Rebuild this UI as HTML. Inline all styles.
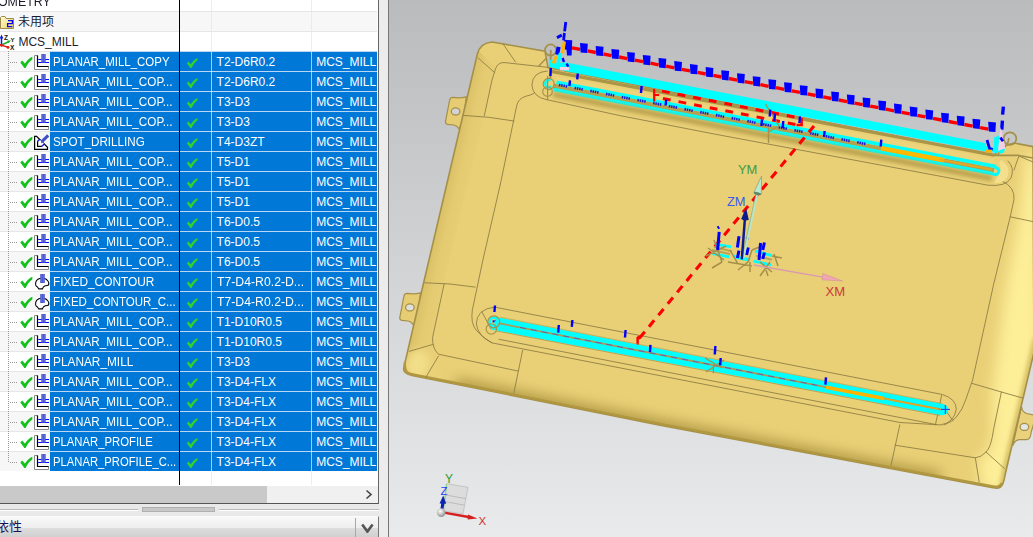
<!DOCTYPE html><html><head><meta charset="utf-8"><title>NX</title><style>html,body{margin:0;padding:0;width:1033px;height:537px;overflow:hidden;background:#ebebeb;font-family:"Liberation Sans","Noto Sans CJK SC",sans-serif;font-size:12px;color:#222}
#panel{position:absolute;left:0;top:0;width:378px;height:503px;background:#fff;overflow:hidden;border-right:1px solid #666;border-bottom:1px solid #555}
.row{position:absolute;left:0;width:377px;height:19px;border-top:1px solid #e6e6e6;background:#fff}
.row.alt{background:#f7f7f7}
.t{position:absolute;top:1px;line-height:19px;white-space:nowrap;transform-origin:0 50%;color:#1c1c2c}
.t.w{color:#fff}
.cj{font-size:12px}
.ic{position:absolute}
.sel{position:absolute;left:50px;top:0;width:327px;height:19px;background:#0078d7}
.row.op{border-top-color:#e6e6e6}
.row.op .sel{box-shadow:0 -1px 0 #b9d6f2}
.dot{position:absolute;left:10px;top:10px;width:8px;height:1px;background-image:linear-gradient(90deg,#999 50%,transparent 50%);background-size:2px 1px}
.vdot{position:absolute;left:8px;top:51px;width:1px;height:411px;background-image:linear-gradient(180deg,#999 50%,transparent 50%);background-size:1px 2px}
.cl{position:absolute;top:0;width:1px;height:485px}
.c2{background:rgba(225,232,240,.75)}
#sb{position:absolute;left:0;top:486px;width:378px;height:17px;background:#f0f0f0}
#thumb{position:absolute;left:0;top:0;width:267px;height:17px;background:#c9c9c9}
#split{position:absolute;left:0;top:504px;width:379px;height:12px;background:#e9e9e9}
#split .l1{position:absolute;left:0;top:6px;width:138px;height:1px;background:#fff;box-shadow:0 -1px 0 #b8b8b8}
#split .l2{position:absolute;left:219px;top:6px;width:160px;height:1px;background:#fff;box-shadow:0 -1px 0 #b8b8b8}
#split .grip{position:absolute;left:142px;top:3px;width:73px;height:5px;background:#c8c8c8;border:1px solid #b0b0b0;box-sizing:border-box}
#dep{position:absolute;left:0;top:516px;width:379px;height:21px;background:linear-gradient(#f8f8f8 0%,#eeeeee 54%,#dddddd 56%,#d0d0d0 100%);border-right:1px solid #777;border-top:1px solid #fbfbfb;box-sizing:border-box}
#dep span{position:absolute;left:-4px;top:0px;font-size:13px;color:#14145a;line-height:19px}
#dep .dv{position:absolute;left:355px;top:1px;width:1px;height:21px;background:#a8a8a8}
#strip{position:absolute;left:379px;top:0;width:9px;height:537px;background:#ececec;border-right:1px solid #777}
#view{position:absolute;left:389px;top:0;width:644px;height:537px;overflow:hidden}
#view svg{display:block}
</style></head><body>
<svg width="0" height="0" style="position:absolute"><defs>
<symbol id="chk" viewBox="0 0 14 14"><path d="M0.3 6.6 L2.2 4.6 L4.9 7.6 C6.8 4.6 9.6 1.9 12.4 0.8 L12.3 3.4 C9.6 5.2 7.2 8.4 5.6 11.9 L4.4 11.9 Z" fill="#14c01c"/></symbol>
<symbol id="chk2" viewBox="0 0 14 13"><path d="M0.8 6.2 L2.4 4.6 L4.7 7.2 C6.4 4.6 8.8 2.1 11.6 0.9 L11.5 3.2 C9.2 4.8 7 7.8 5.6 11 L4.4 11 Z" fill="#2fd030"/></symbol>
<symbol id="opp" viewBox="0 0 17 18"><path d="M0.5 1.5 H3.5 V12.5 H14.5 V15.5 H0.5 Z" fill="#fff" stroke="#8a8a8a" stroke-width="1"/><path d="M3.5 1.5 V12.5 H14.5" fill="none" stroke="#000" stroke-width="1.2"/><path d="M4.2 5.5 H15 M4.2 8.5 H15" stroke="#0a0aff" stroke-width="1"/><rect x="7.3" y="0" width="4.4" height="8.7" fill="#4c5ad0"/><path d="M8.4 0.5 V8.5 M10.4 0.5 V8.5" stroke="#7c8ae6" stroke-width="0.8" stroke-dasharray="1 1"/></symbol>
<symbol id="ops" viewBox="0 -0.8 17 18"><path d="M0.6 1.6 H2.6 L13.5 12.5 V14.5 H0.6 Z" fill="#fff" stroke="#000" stroke-width="1.2"/><path d="M3.6 6.5 V11.6 H8" fill="none" stroke="#000" stroke-width="1.2"/><path d="M3.6 6.5 L6 4.2 M7.6 11.6 L10.3 9.2" stroke="#1010e0" stroke-width="1.2"/><path d="M3.2 11.9 L3.2 6.3 L5.7 4.6 L10 9 L7.8 11.9Z" fill="#fff" stroke="none"/><path d="M3.6 6.5 V11.6 H7.8" fill="none" stroke="#000" stroke-width="1.2"/><path d="M3.6 6.6 L6 4.4 M7.6 11.6 L10.3 9.2" stroke="#1010e0" stroke-width="1.2"/><path d="M7.6 7 L14.2 0.6" stroke="#3f4fc8" stroke-width="3"/><path d="M7 8.5 L7.2 6 L9.4 8 Z" fill="#5b66c8"/></symbol>
<symbol id="opf" viewBox="0 0 17 18"><path d="M7 4.3 C4 4.6 2.2 6.4 1.7 8.6 C1.4 10.4 1.6 11.6 2.2 12 C3.4 12.6 4.2 14 4.8 14.9 H8.4 C8.8 13.6 9.6 12.4 11.2 11.8 C12.4 11.4 14 11.4 14.6 11 C15 9.6 14.8 8 14 7 C13 5.6 11.6 4.6 10 4.2 Z" fill="#fff" stroke="#000" stroke-width="1.1"/><rect x="6.2" y="0" width="4.6" height="9" fill="#4c5ad0"/><path d="M7.4 0.5 V8.8 M9.4 0.5 V8.8" stroke="#7c8ae6" stroke-width="0.8" stroke-dasharray="1 1"/></symbol>
<symbol id="folder" viewBox="0 0 17 17"><defs><linearGradient id="fg" x1="0" y1="0" x2="1" y2="1"><stop offset="0" stop-color="#fffbd8"/><stop offset="1" stop-color="#f0d465"/></linearGradient></defs><path d="M0.5 4.5 L1.5 3.5 H5 L6 5.5 H13.5 V15.5 H0.5 Z" fill="url(#fg)" stroke="#9c8a4a" stroke-width="1"/><path d="M8 7.6 H12.4 V10.6 H7.6 V13.6 H12.4" fill="none" stroke="#0a0aee" stroke-width="1.3"/></symbol>
<symbol id="mcs" viewBox="0 0 20 20"><path d="M3.5 13 V5" stroke="#0a1ed0" stroke-width="1.5"/><path d="M1.6 6.6 L3.5 2.6 L5.4 6.6 Z" fill="#0a1ed0"/><path d="M3.6 13 L11 9.6" stroke="#1fae2a" stroke-width="1.6"/><path d="M9.2 8.4 L13 8.6 L10.4 11.2 Z" fill="#1fae2a"/><path d="M2 12.6 L11 15.6" stroke="#e01818" stroke-width="1.5"/><circle cx="3.4" cy="13.2" r="1.5" fill="#e01818"/><circle cx="10" cy="15.4" r="1.4" fill="#e01818"/><text x="6" y="8" font-size="6.5" font-weight="bold" fill="#111" font-family="Liberation Sans, sans-serif">Z</text><text x="12.4" y="10" font-size="6" font-weight="bold" fill="#111" font-family="Liberation Sans, sans-serif">Y</text><text x="12" y="18.4" font-size="6.5" font-weight="bold" fill="#111" font-family="Liberation Sans, sans-serif">X</text></symbol>
</defs></svg>

<div id="panel">
<div class="row" style="top:-9px"><span class="t" style="left:-1.6px;transform:scaleX(1.03)">OMETRY</span></div>
<div class="row alt" style="top:11px"><svg class="ic" style="left:0;top:1px" width="17" height="17"><use href="#folder"/></svg><span class="t cj" style="left:18px">未用项</span></div>
<div class="row" style="top:31px"><svg class="ic" style="left:-2px;top:0" width="20" height="20"><use href="#mcs"/></svg><span class="t" style="left:18.4px">MCS_MILL</span></div>
<div class="row op alt" style="top:51px"><i class="dot"></i><svg class="ic" style="left:20px;top:4px" width="14" height="14"><use href="#chk"/></svg><svg class="ic" style="left:34px;top:2px" width="17" height="18"><use href="#opp"/></svg><div class="sel"></div><span class="t w" style="left:53.4px;transform:scaleX(0.955)">PLANAR_MILL_COPY</span><svg class="ic" style="left:186px;top:5px" width="14" height="13"><use href="#chk2"/></svg><span class="t w" style="left:216.6px;transform:scaleX(1)">T2-D6R0.2</span><span class="t w" style="left:316.2px">MCS_MILL</span></div>
<div class="row op" style="top:71px"><i class="dot"></i><svg class="ic" style="left:20px;top:4px" width="14" height="14"><use href="#chk"/></svg><svg class="ic" style="left:34px;top:2px" width="17" height="18"><use href="#opp"/></svg><div class="sel"></div><span class="t w" style="left:53.4px;transform:scaleX(0.975)">PLANAR_MILL_COP...</span><svg class="ic" style="left:186px;top:5px" width="14" height="13"><use href="#chk2"/></svg><span class="t w" style="left:216.6px;transform:scaleX(1)">T2-D6R0.2</span><span class="t w" style="left:316.2px">MCS_MILL</span></div>
<div class="row op alt" style="top:91px"><i class="dot"></i><svg class="ic" style="left:20px;top:4px" width="14" height="14"><use href="#chk"/></svg><svg class="ic" style="left:34px;top:2px" width="17" height="18"><use href="#opp"/></svg><div class="sel"></div><span class="t w" style="left:53.4px;transform:scaleX(0.975)">PLANAR_MILL_COP...</span><svg class="ic" style="left:186px;top:5px" width="14" height="13"><use href="#chk2"/></svg><span class="t w" style="left:216.6px;transform:scaleX(1)">T3-D3</span><span class="t w" style="left:316.2px">MCS_MILL</span></div>
<div class="row op" style="top:111px"><i class="dot"></i><svg class="ic" style="left:20px;top:4px" width="14" height="14"><use href="#chk"/></svg><svg class="ic" style="left:34px;top:2px" width="17" height="18"><use href="#opp"/></svg><div class="sel"></div><span class="t w" style="left:53.4px;transform:scaleX(0.975)">PLANAR_MILL_COP...</span><svg class="ic" style="left:186px;top:5px" width="14" height="13"><use href="#chk2"/></svg><span class="t w" style="left:216.6px;transform:scaleX(1)">T3-D3</span><span class="t w" style="left:316.2px">MCS_MILL</span></div>
<div class="row op alt" style="top:131px"><i class="dot"></i><svg class="ic" style="left:20px;top:4px" width="14" height="14"><use href="#chk"/></svg><svg class="ic" style="left:34px;top:2px" width="17" height="18"><use href="#ops"/></svg><div class="sel"></div><span class="t w" style="left:53.4px;transform:scaleX(0.968)">SPOT_DRILLING</span><svg class="ic" style="left:186px;top:5px" width="14" height="13"><use href="#chk2"/></svg><span class="t w" style="left:216.6px;transform:scaleX(1)">T4-D3ZT</span><span class="t w" style="left:316.2px">MCS_MILL</span></div>
<div class="row op" style="top:151px"><i class="dot"></i><svg class="ic" style="left:20px;top:4px" width="14" height="14"><use href="#chk"/></svg><svg class="ic" style="left:34px;top:2px" width="17" height="18"><use href="#opp"/></svg><div class="sel"></div><span class="t w" style="left:53.4px;transform:scaleX(0.975)">PLANAR_MILL_COP...</span><svg class="ic" style="left:186px;top:5px" width="14" height="13"><use href="#chk2"/></svg><span class="t w" style="left:216.6px;transform:scaleX(1)">T5-D1</span><span class="t w" style="left:316.2px">MCS_MILL</span></div>
<div class="row op alt" style="top:171px"><i class="dot"></i><svg class="ic" style="left:20px;top:4px" width="14" height="14"><use href="#chk"/></svg><svg class="ic" style="left:34px;top:2px" width="17" height="18"><use href="#opp"/></svg><div class="sel"></div><span class="t w" style="left:53.4px;transform:scaleX(0.975)">PLANAR_MILL_COP...</span><svg class="ic" style="left:186px;top:5px" width="14" height="13"><use href="#chk2"/></svg><span class="t w" style="left:216.6px;transform:scaleX(1)">T5-D1</span><span class="t w" style="left:316.2px">MCS_MILL</span></div>
<div class="row op" style="top:191px"><i class="dot"></i><svg class="ic" style="left:20px;top:4px" width="14" height="14"><use href="#chk"/></svg><svg class="ic" style="left:34px;top:2px" width="17" height="18"><use href="#opp"/></svg><div class="sel"></div><span class="t w" style="left:53.4px;transform:scaleX(0.975)">PLANAR_MILL_COP...</span><svg class="ic" style="left:186px;top:5px" width="14" height="13"><use href="#chk2"/></svg><span class="t w" style="left:216.6px;transform:scaleX(1)">T5-D1</span><span class="t w" style="left:316.2px">MCS_MILL</span></div>
<div class="row op alt" style="top:211px"><i class="dot"></i><svg class="ic" style="left:20px;top:4px" width="14" height="14"><use href="#chk"/></svg><svg class="ic" style="left:34px;top:2px" width="17" height="18"><use href="#opp"/></svg><div class="sel"></div><span class="t w" style="left:53.4px;transform:scaleX(0.975)">PLANAR_MILL_COP...</span><svg class="ic" style="left:186px;top:5px" width="14" height="13"><use href="#chk2"/></svg><span class="t w" style="left:216.6px;transform:scaleX(1)">T6-D0.5</span><span class="t w" style="left:316.2px">MCS_MILL</span></div>
<div class="row op" style="top:231px"><i class="dot"></i><svg class="ic" style="left:20px;top:4px" width="14" height="14"><use href="#chk"/></svg><svg class="ic" style="left:34px;top:2px" width="17" height="18"><use href="#opp"/></svg><div class="sel"></div><span class="t w" style="left:53.4px;transform:scaleX(0.975)">PLANAR_MILL_COP...</span><svg class="ic" style="left:186px;top:5px" width="14" height="13"><use href="#chk2"/></svg><span class="t w" style="left:216.6px;transform:scaleX(1)">T6-D0.5</span><span class="t w" style="left:316.2px">MCS_MILL</span></div>
<div class="row op alt" style="top:251px"><i class="dot"></i><svg class="ic" style="left:20px;top:4px" width="14" height="14"><use href="#chk"/></svg><svg class="ic" style="left:34px;top:2px" width="17" height="18"><use href="#opp"/></svg><div class="sel"></div><span class="t w" style="left:53.4px;transform:scaleX(0.975)">PLANAR_MILL_COP...</span><svg class="ic" style="left:186px;top:5px" width="14" height="13"><use href="#chk2"/></svg><span class="t w" style="left:216.6px;transform:scaleX(1)">T6-D0.5</span><span class="t w" style="left:316.2px">MCS_MILL</span></div>
<div class="row op" style="top:271px"><i class="dot"></i><svg class="ic" style="left:20px;top:4px" width="14" height="14"><use href="#chk"/></svg><svg class="ic" style="left:34px;top:2px" width="17" height="18"><use href="#opf"/></svg><div class="sel"></div><span class="t w" style="left:53.4px;transform:scaleX(0.99)">FIXED_CONTOUR</span><svg class="ic" style="left:186px;top:5px" width="14" height="13"><use href="#chk2"/></svg><span class="t w" style="left:216.6px;transform:scaleX(1.02)">T7-D4-R0.2-D...</span><span class="t w" style="left:316.2px">MCS_MILL</span></div>
<div class="row op alt" style="top:291px"><i class="dot"></i><svg class="ic" style="left:20px;top:4px" width="14" height="14"><use href="#chk"/></svg><svg class="ic" style="left:34px;top:2px" width="17" height="18"><use href="#opf"/></svg><div class="sel"></div><span class="t w" style="left:53.4px;transform:scaleX(0.96)">FIXED_CONTOUR_C...</span><svg class="ic" style="left:186px;top:5px" width="14" height="13"><use href="#chk2"/></svg><span class="t w" style="left:216.6px;transform:scaleX(1.02)">T7-D4-R0.2-D...</span><span class="t w" style="left:316.2px">MCS_MILL</span></div>
<div class="row op" style="top:311px"><i class="dot"></i><svg class="ic" style="left:20px;top:4px" width="14" height="14"><use href="#chk"/></svg><svg class="ic" style="left:34px;top:2px" width="17" height="18"><use href="#opp"/></svg><div class="sel"></div><span class="t w" style="left:53.4px;transform:scaleX(0.975)">PLANAR_MILL_COP...</span><svg class="ic" style="left:186px;top:5px" width="14" height="13"><use href="#chk2"/></svg><span class="t w" style="left:216.6px;transform:scaleX(1)">T1-D10R0.5</span><span class="t w" style="left:316.2px">MCS_MILL</span></div>
<div class="row op alt" style="top:331px"><i class="dot"></i><svg class="ic" style="left:20px;top:4px" width="14" height="14"><use href="#chk"/></svg><svg class="ic" style="left:34px;top:2px" width="17" height="18"><use href="#opp"/></svg><div class="sel"></div><span class="t w" style="left:53.4px;transform:scaleX(0.975)">PLANAR_MILL_COP...</span><svg class="ic" style="left:186px;top:5px" width="14" height="13"><use href="#chk2"/></svg><span class="t w" style="left:216.6px;transform:scaleX(1)">T1-D10R0.5</span><span class="t w" style="left:316.2px">MCS_MILL</span></div>
<div class="row op" style="top:351px"><i class="dot"></i><svg class="ic" style="left:20px;top:4px" width="14" height="14"><use href="#chk"/></svg><svg class="ic" style="left:34px;top:2px" width="17" height="18"><use href="#opp"/></svg><div class="sel"></div><span class="t w" style="left:53.4px;transform:scaleX(0.987)">PLANAR_MILL</span><svg class="ic" style="left:186px;top:5px" width="14" height="13"><use href="#chk2"/></svg><span class="t w" style="left:216.6px;transform:scaleX(1)">T3-D3</span><span class="t w" style="left:316.2px">MCS_MILL</span></div>
<div class="row op alt" style="top:371px"><i class="dot"></i><svg class="ic" style="left:20px;top:4px" width="14" height="14"><use href="#chk"/></svg><svg class="ic" style="left:34px;top:2px" width="17" height="18"><use href="#opp"/></svg><div class="sel"></div><span class="t w" style="left:53.4px;transform:scaleX(0.975)">PLANAR_MILL_COP...</span><svg class="ic" style="left:186px;top:5px" width="14" height="13"><use href="#chk2"/></svg><span class="t w" style="left:216.6px;transform:scaleX(1)">T3-D4-FLX</span><span class="t w" style="left:316.2px">MCS_MILL</span></div>
<div class="row op" style="top:391px"><i class="dot"></i><svg class="ic" style="left:20px;top:4px" width="14" height="14"><use href="#chk"/></svg><svg class="ic" style="left:34px;top:2px" width="17" height="18"><use href="#opp"/></svg><div class="sel"></div><span class="t w" style="left:53.4px;transform:scaleX(0.975)">PLANAR_MILL_COP...</span><svg class="ic" style="left:186px;top:5px" width="14" height="13"><use href="#chk2"/></svg><span class="t w" style="left:216.6px;transform:scaleX(1)">T3-D4-FLX</span><span class="t w" style="left:316.2px">MCS_MILL</span></div>
<div class="row op alt" style="top:411px"><i class="dot"></i><svg class="ic" style="left:20px;top:4px" width="14" height="14"><use href="#chk"/></svg><svg class="ic" style="left:34px;top:2px" width="17" height="18"><use href="#opp"/></svg><div class="sel"></div><span class="t w" style="left:53.4px;transform:scaleX(0.975)">PLANAR_MILL_COP...</span><svg class="ic" style="left:186px;top:5px" width="14" height="13"><use href="#chk2"/></svg><span class="t w" style="left:216.6px;transform:scaleX(1)">T3-D4-FLX</span><span class="t w" style="left:316.2px">MCS_MILL</span></div>
<div class="row op" style="top:431px"><i class="dot"></i><svg class="ic" style="left:20px;top:4px" width="14" height="14"><use href="#chk"/></svg><svg class="ic" style="left:34px;top:2px" width="17" height="18"><use href="#opp"/></svg><div class="sel"></div><span class="t w" style="left:53.4px;transform:scaleX(0.942)">PLANAR_PROFILE</span><svg class="ic" style="left:186px;top:5px" width="14" height="13"><use href="#chk2"/></svg><span class="t w" style="left:216.6px;transform:scaleX(1)">T3-D4-FLX</span><span class="t w" style="left:316.2px">MCS_MILL</span></div>
<div class="row op alt" style="top:451px"><i class="dot"></i><svg class="ic" style="left:20px;top:4px" width="14" height="14"><use href="#chk"/></svg><svg class="ic" style="left:34px;top:2px" width="17" height="18"><use href="#opp"/></svg><div class="sel"></div><span class="t w" style="left:53.4px;transform:scaleX(0.938)">PLANAR_PROFILE_C...</span><svg class="ic" style="left:186px;top:5px" width="14" height="13"><use href="#chk2"/></svg><span class="t w" style="left:216.6px;transform:scaleX(1)">T3-D4-FLX</span><span class="t w" style="left:316.2px">MCS_MILL</span></div>
<div class="vdot"></div><div class="cl" style="left:179px;background:#000;height:485px"></div><div class="cl c2" style="left:211px"></div><div class="cl c2" style="left:311px"></div>
<div id="sb"><div id="thumb"></div><svg style="position:absolute;left:364px;top:3px" width="10" height="11"><path d="M2.5 1.5 L7 5.5 L2.5 9.5" fill="none" stroke="#444" stroke-width="1.6"/></svg></div>
</div>
<div id="split"><div class="l1"></div><div class="grip"></div><div class="l2"></div></div>
<div id="dep"><span class="cj">依性</span><div class="dv"></div><svg style="position:absolute;left:361px;top:6px" width="13" height="10"><path d="M1.2 1.4 L6.4 8.6 L11.6 1.4" fill="none" stroke="#555" stroke-width="2.6"/></svg></div>
<div id="strip"></div>
<div id="view"><svg width="644" height="537" viewBox="389 0 644 537" font-family="Liberation Sans, sans-serif">
<defs>
<linearGradient id="bg" x1="0" y1="0" x2="0" y2="1"><stop offset="0" stop-color="#babbbc"/><stop offset="0.5" stop-color="#d2d3d4"/><stop offset="1" stop-color="#e9eaeb"/></linearGradient>
<linearGradient id="rt" gradientUnits="userSpaceOnUse" x1="978" y1="300" x2="1030" y2="312"><stop offset="0" stop-color="#e9d077"/><stop offset="0.35" stop-color="#ecd680"/><stop offset="0.8" stop-color="#fdec96"/><stop offset="1" stop-color="#f4e08a"/></linearGradient>
<linearGradient id="cr" gradientUnits="userSpaceOnUse" x1="978" y1="455" x2="1002" y2="484"><stop offset="0" stop-color="#f3e08a"/><stop offset="0.7" stop-color="#fff29e"/><stop offset="1" stop-color="#e6d078"/></linearGradient>
<linearGradient id="bx" gradientUnits="userSpaceOnUse" x1="409" y1="0" x2="1000" y2="0"><stop offset="0" stop-color="#f0dc84" stop-opacity="0.9"/><stop offset="0.12" stop-color="#e9d077" stop-opacity="0"/><stop offset="0.75" stop-color="#e9d077" stop-opacity="0"/><stop offset="0.97" stop-color="#f6e48e" stop-opacity="1"/></linearGradient>
<linearGradient id="lf" gradientUnits="userSpaceOnUse" x1="443" y1="200" x2="472" y2="206.8"><stop offset="0" stop-color="#dac065"/><stop offset="0.35" stop-color="#e4cb72"/><stop offset="1" stop-color="#e9d077"/></linearGradient>
<linearGradient id="bt" gradientUnits="userSpaceOnUse" x1="700" y1="385" x2="690.5" y2="435"><stop offset="0" stop-color="#e9d077"/><stop offset="0.5" stop-color="#e2ca70"/><stop offset="0.8" stop-color="#d6bd64"/><stop offset="0.95" stop-color="#c0a752"/><stop offset="1" stop-color="#b59b43"/></linearGradient>
<filter id="bl6" x="-20%" y="-20%" width="140%" height="140%"><feGaussianBlur stdDeviation="6.5"/></filter><filter id="bl5" x="-20%" y="-20%" width="140%" height="140%"><feGaussianBlur stdDeviation="4.5"/></filter><filter id="bl3" x="-20%" y="-20%" width="140%" height="140%"><feGaussianBlur stdDeviation="2"/></filter>
<radialGradient id="sph" cx="0.4" cy="0.35" r="0.7"><stop offset="0" stop-color="#fff"/><stop offset="1" stop-color="#8a8a8a"/></radialGradient>
<clipPath id="pc"><path id="sil" d="M477.3 54.2 Q480 43 492 42 L545 51.2 L548 67.6 L994 155.4 L1004 146 L1014 143 L1033 146.6 L1034 352 L1025 390 L1008 462.3 L1005.4 473.5 Q1004.4 480 1002.6 484.4 Q1000 489.6 993 487.6 L953 480.2 L740 440.2 L660 425.1 L470 387 L412 375.4 Q402 373.4 404 366.9 L413.5 326 L421 294 Z"/></clipPath>
</defs>
<rect x="389" y="0" width="644" height="537" fill="url(#bg)"/>
<path d="M466.2 96.8 Q460.6 98.4 452.8 97.4 Q450.0 97.4 449.6 100.4 L445.5 121.4 Q445.2 124.0 447.6 124.4 L453.9 125.0 Q457.0 125.6 458.9 128.7 L463.6 119.4 Z" fill="#e6cd74" stroke="#a5904a" stroke-width="1.2"/>
<ellipse cx="455.6" cy="111.4" rx="4.3" ry="3.5" fill="#d2d3d4" stroke="#a5904a" stroke-width="1.3"/>
<path d="M420.5 292.8 Q414.9 294.4 407.1 293.4 Q404.3 293.4 403.9 296.4 L399.8 317.4 Q399.5 320.0 401.9 320.4 L408.2 321.0 Q411.3 321.6 413.2 324.7 L417.9 315.4 Z" fill="#e6cd74" stroke="#a5904a" stroke-width="1.2"/>
<ellipse cx="409.9" cy="307.4" rx="4.3" ry="3.5" fill="#dedfdf" stroke="#a5904a" stroke-width="1.3"/>
<path d="M1021.6 406.8 Q1022 412 1026.6 413.5 L1036 415.6 L1031.2 432 Q1030.6 439.4 1027 439.7 L1019 439.7 Q1014.6 440.4 1012.7 445.9 Z" fill="#ead27c" stroke="#a5904a" stroke-width="1.2"/>
<ellipse cx="1024.4" cy="426.9" rx="4.3" ry="3.5" fill="#e4e5e5" stroke="#a5904a" stroke-width="1.3"/>
<use href="#sil" fill="#e9d077"/>
<g clip-path="url(#pc)">
<path d="M477 54 L404 366 L412 376 L470 388 L445 350 L432 337 L444 283 L484 116 L492 80 L496 68 L478 50 Z" fill="url(#lf)"/>
<g filter="url(#bl6)"><path d="M1040 150 L1026 158 L1019 217 L1006 284 L992 392 L993 430 L988 452 L978 460 L981 492 L1010 492 L1040 361 Z" fill="#fdee98"/></g>
<g filter="url(#bl3)"><path d="M1036 338 L1005.6 468 L1002 487" stroke="#d2ba5c" stroke-width="5" fill="none"/></g>
<g filter="url(#bl6)"><path d="M455 386 L660 427 L740 442 L940 480" stroke="#b39b46" stroke-width="17" fill="none"/></g>
<g filter="url(#bl5)"><path d="M404 370 L410 352 L424 350 L430 360 L422 384 Z" fill="#f3df8a"/></g>
</g>
<use href="#sil" fill="none" stroke="#a5904a" stroke-width="1.6"/>
<path d="M405 362 Q403.4 372.6 411.6 374.3 L470 385.8 L660 423.9 L740 439 L953 479 L993 486.4 Q999.6 488 1002 483" stroke="#b09740" stroke-width="2.4" fill="none"/>
<g clip-path="url(#pc)" stroke-linecap="round">
<path d="M503.4 44.5 L515.5 62" fill="none" stroke="#8f7f45" stroke-width="0.9" />
<path d="M478.2 58 L494.7 72.6" fill="none" stroke="#8f7f45" stroke-width="0.9" />
<path d="M484.3 115.8 L492 80 L495.6 68.7 Q497.5 62.6 504 62.5 L547.4 67.3" fill="none" stroke="#8f7f45" stroke-width="0.9" />
<path d="M463.6 115.4 Q490 116.5 513.9 121" fill="none" stroke="#8f7f45" stroke-width="0.9" />
<path d="M539 65.8 L550 54.6" fill="none" stroke="#a5904a" stroke-width="1.4" />
<path d="M500.4 184 L516.8 105.2 Q518.5 98.4 526 96.2 Q531 95.2 534 93.3" fill="none" stroke="#8f7f45" stroke-width="0.9" />
<path d="M500.4 184 L482.9 260 L472.3 310.3 Q470.5 323 476 330 Q482 337.5 492 342.9" fill="none" stroke="#8f7f45" stroke-width="0.9" />
<path d="M944 425 Q952 422 956.3 417.2 Q963 409 965.6 400 L972.6 380 L993.7 284 L1010.2 216.8 L1014 199.4 Q1015 187 1002.4 181.3" fill="none" stroke="#8f7f45" stroke-width="0.9" />
<path d="M547.2 71 Q532.5 72 531.9 85 Q532.6 97 546.5 99.6" fill="none" stroke="#8f7f45" stroke-width="0.9" />
<path d="M424.8 282.8 Q450 283 475.2 287.1" fill="none" stroke="#8f7f45" stroke-width="0.9" />
<path d="M444.2 283.6 L432.6 337.4 Q432 348 438.4 354.2 L517.8 371" fill="none" stroke="#8f7f45" stroke-width="0.9" />
<path d="M409.4 351.3 L432.6 344.5" fill="none" stroke="#8f7f45" stroke-width="0.9" />
<path d="M438.4 356.1 L425.8 377.4" fill="none" stroke="#8f7f45" stroke-width="0.9" />
<path d="M522.6 350.3 L513.9 392.9" fill="none" stroke="#8f7f45" stroke-width="0.9" />
<path d="M1001.4 392 L993.7 428.7 Q991 448 986 452 Q981 457.5 975.3 457.8 L895 445.2" fill="none" stroke="#8f7f45" stroke-width="0.9" />
<path d="M899.8 424.8 L891 465.5" fill="none" stroke="#8f7f45" stroke-width="0.9" />
<path d="M986 452 L1004.3 468.4" fill="none" stroke="#8f7f45" stroke-width="0.9" />
<path d="M975.3 457.8 L979.2 482" fill="none" stroke="#8f7f45" stroke-width="0.9" />
<path d="M972 383.4 L1001.4 392 L1024.7 398.6" fill="none" stroke="#8f7f45" stroke-width="0.9" />
<path d="M1010.2 216.8 L1033 221.6" fill="none" stroke="#8f7f45" stroke-width="0.9" />
<path d="M1033 162 L1018.9 156 L1014 170" fill="none" stroke="#8f7f45" stroke-width="0.9" />
<path d="M494.5 307.1 L942.4 394.5 Q956.5 399 956.3 409.4 Q954 422.6 940.8 424.9 L900 422.5 L492 342.9 Q478 336 476.3 324 Q476.5 309 494.5 307.1" fill="none" stroke="#8f7f45" stroke-width="0.9" />
<path d="M499 339.3 L936.2 424.6" fill="none" stroke="#8f7f45" stroke-width="0.9" />
<path d="M941.6 395.5 L935.4 424.9" fill="none" stroke="#8f7f45" stroke-width="0.9" />
<path d="M947 412 L953 421" fill="none" stroke="#8f7f45" stroke-width="0.9" />
<path d="M482 312 L491 329" fill="none" stroke="#8f7f45" stroke-width="0.9" />
<path d="M546.5 99.6 L620 115.6 L714.2 134 L890 166.8 L987.9 185.2 Q1006 187 1011 178 Q1015 168 1008 161" fill="none" stroke="#8f7f45" stroke-width="0.9" />
</g>
<circle cx="550.6" cy="50" r="5.6" fill="none" stroke="#a5904a" stroke-width="1.7"/>
<path d="M550.8 50 L550.4 78" fill="none" stroke="#a5904a" stroke-width="1.8"/>
<circle cx="1010" cy="138.6" r="6.3" fill="none" stroke="#a5904a" stroke-width="1.7"/>
<path d="M1009 138 L1007.5 144 L997.7 154.7 M993 155.4 L1017.8 155.3 L1033 158" fill="none" stroke="#a5904a" stroke-width="1.6"/>
<path d="M566 62.4 L986 143.2 L986 151.4 L566 71.2 Z" fill="#00ffff"/>
<path d="M550 59.8 L554.6 59.8 L556 63 L566 62.4 L566 71.2 L550 67 Z" fill="#00ffff"/>
<path d="M995.6 137 L999.5 135 L1001 152 L985 151 L986 146 L995 148 Z" fill="#00ffff"/>
<path d="M550 71.2 L993.7 155.2" stroke="#ab9546" stroke-width="3.3" fill="none"/>
<path d="M556 76.5 L994 158.8 L994 164 L556 81.5 Z" fill="#ebd47c"/>
<path d="M553 86 L994 170.4" stroke="#b7a04e" stroke-width="5" fill="none"/>
<path d="M556.5 82.2 L996 166.6" stroke="#00ffff" stroke-width="3.6" fill="none"/>
<path d="M553.6 89.5 L992 173.5" stroke="#00ffff" stroke-width="3.8" fill="none"/>
<path d="M994 166.4 Q1001 169 998 173.5 Q996 175.6 991 173.4" stroke="#00ffff" stroke-width="3.2" fill="none"/>
<path d="M558.9 84.9 l8.2 1.6" stroke="#1c1cd8" stroke-width="2.6" stroke-dasharray="1.5 0.8" fill="none"/>
<path d="M574.6 87.9 l8.2 1.6" stroke="#1c1cd8" stroke-width="2.6" stroke-dasharray="1.5 0.8" fill="none"/>
<path d="M590.3 90.9 l8.2 1.6" stroke="#1c1cd8" stroke-width="2.6" stroke-dasharray="1.5 0.8" fill="none"/>
<path d="M606.0 93.9 l8.2 1.6" stroke="#1c1cd8" stroke-width="2.6" stroke-dasharray="1.5 0.8" fill="none"/>
<path d="M621.7 97.0 l8.2 1.6" stroke="#1c1cd8" stroke-width="2.6" stroke-dasharray="1.5 0.8" fill="none"/>
<path d="M637.4 100.0 l8.2 1.6" stroke="#1c1cd8" stroke-width="2.6" stroke-dasharray="1.5 0.8" fill="none"/>
<path d="M653.1 103.0 l8.2 1.6" stroke="#1c1cd8" stroke-width="2.6" stroke-dasharray="1.5 0.8" fill="none"/>
<path d="M668.8 106.0 l8.2 1.6" stroke="#1c1cd8" stroke-width="2.6" stroke-dasharray="1.5 0.8" fill="none"/>
<path d="M684.5 109.1 l8.2 1.6" stroke="#1c1cd8" stroke-width="2.6" stroke-dasharray="1.5 0.8" fill="none"/>
<path d="M700.2 112.1 l8.2 1.6" stroke="#1c1cd8" stroke-width="2.6" stroke-dasharray="1.5 0.8" fill="none"/>
<path d="M715.9 115.1 l8.2 1.6" stroke="#1c1cd8" stroke-width="2.6" stroke-dasharray="1.5 0.8" fill="none"/>
<path d="M731.6 118.1 l8.2 1.6" stroke="#1c1cd8" stroke-width="2.6" stroke-dasharray="1.5 0.8" fill="none"/>
<path d="M747.3 121.1 l8.2 1.6" stroke="#1c1cd8" stroke-width="2.6" stroke-dasharray="1.5 0.8" fill="none"/>
<path d="M763.0 124.2 l8.2 1.6" stroke="#1c1cd8" stroke-width="2.6" stroke-dasharray="1.5 0.8" fill="none"/>
<path d="M778.7 127.2 l8.2 1.6" stroke="#1c1cd8" stroke-width="2.6" stroke-dasharray="1.5 0.8" fill="none"/>
<path d="M794.4 130.2 l8.2 1.6" stroke="#1c1cd8" stroke-width="2.6" stroke-dasharray="1.5 0.8" fill="none"/>
<path d="M810.1 133.2 l8.2 1.6" stroke="#1c1cd8" stroke-width="2.6" stroke-dasharray="1.5 0.8" fill="none"/>
<path d="M825.8 136.3 l8.2 1.6" stroke="#1c1cd8" stroke-width="2.6" stroke-dasharray="1.5 0.8" fill="none"/>
<path d="M841.5 139.3 l8.2 1.6" stroke="#1c1cd8" stroke-width="2.6" stroke-dasharray="1.5 0.8" fill="none"/>
<path d="M857.2 142.3 l8.2 1.6" stroke="#1c1cd8" stroke-width="2.6" stroke-dasharray="1.5 0.8" fill="none"/>
<path d="M881 148.2 L944 160.2" stroke="#ffb800" stroke-width="4.6" fill="none"/>
<path d="M940 159.6 L992 169.6" stroke="#e8a820" stroke-width="1.6" fill="none"/>
<g clip-path="url(#pc)"><g filter="url(#bl3)"><path d="M553 94.4 L992 178.6" stroke="#b39b48" stroke-width="5" fill="none"/></g></g>
<path d="M550.6 80.6 A3.6 3.6 0 1 0 551.6 86" fill="none" stroke="#00ffff" stroke-width="2.4"/>
<circle cx="548.7" cy="84" r="5.6" fill="none" stroke="#a5904a" stroke-width="1.1"/>
<circle cx="547.5" cy="91.5" r="4.8" fill="none" stroke="#a5904a" stroke-width="1.1"/>
<path d="M547.6 76 V100" fill="none" stroke="#a5904a" stroke-width="1.2"/>
<path d="M1001 160 Q1011 166 1008 176 Q1004 184 994 183 L998 176 Q1003 170 999 163 Z" fill="#f3df8e"/>
<path d="M571.9 47.8 L580.2 49.4" stroke="#ff0000" stroke-width="3.4" fill="none"/>
<path d="M564.3 39.8 l7.8 0.8 l-0.6 9.4 l-6.6 -0.6 Z" fill="#0000ff"/>
<path d="M587.6 50.9 L595.9 52.5" stroke="#ff0000" stroke-width="3.4" fill="none"/>
<path d="M580.0 42.9 l7.8 0.8 l-0.6 9.4 l-6.6 -0.6 Z" fill="#0000ff"/>
<path d="M603.3 54.0 L611.6 55.6" stroke="#ff0000" stroke-width="3.4" fill="none"/>
<path d="M595.7 45.9 l7.8 0.8 l-0.6 9.4 l-6.6 -0.6 Z" fill="#0000ff"/>
<path d="M619.0 57.0 L627.3 58.6" stroke="#ff0000" stroke-width="3.4" fill="none"/>
<path d="M611.4 48.9 l7.8 0.8 l-0.6 9.4 l-6.6 -0.6 Z" fill="#0000ff"/>
<path d="M634.7 60.1 L643.0 61.7" stroke="#ff0000" stroke-width="3.4" fill="none"/>
<path d="M627.1 52.0 l7.8 0.8 l-0.6 9.4 l-6.6 -0.6 Z" fill="#0000ff"/>
<path d="M650.4 63.2 L658.7 64.8" stroke="#ff0000" stroke-width="3.4" fill="none"/>
<path d="M642.8 55.0 l7.8 0.8 l-0.6 9.4 l-6.6 -0.6 Z" fill="#0000ff"/>
<path d="M666.1 66.2 L674.4 67.8" stroke="#ff0000" stroke-width="3.4" fill="none"/>
<path d="M658.5 58.0 l7.8 0.8 l-0.6 9.4 l-6.6 -0.6 Z" fill="#0000ff"/>
<path d="M681.8 69.3 L690.1 70.9" stroke="#ff0000" stroke-width="3.4" fill="none"/>
<path d="M674.2 61.1 l7.8 0.8 l-0.6 9.4 l-6.6 -0.6 Z" fill="#0000ff"/>
<path d="M697.5 72.4 L705.8 74.0" stroke="#ff0000" stroke-width="3.4" fill="none"/>
<path d="M689.9 64.1 l7.8 0.8 l-0.6 9.4 l-6.6 -0.6 Z" fill="#0000ff"/>
<path d="M713.2 75.4 L721.5 77.0" stroke="#ff0000" stroke-width="3.4" fill="none"/>
<path d="M705.6 67.1 l7.8 0.8 l-0.6 9.4 l-6.6 -0.6 Z" fill="#0000ff"/>
<path d="M728.9 78.5 L737.2 80.1" stroke="#ff0000" stroke-width="3.4" fill="none"/>
<path d="M721.3 70.2 l7.8 0.8 l-0.6 9.4 l-6.6 -0.6 Z" fill="#0000ff"/>
<path d="M744.6 81.6 L752.9 83.2" stroke="#ff0000" stroke-width="3.4" fill="none"/>
<path d="M737.0 73.2 l7.8 0.8 l-0.6 9.4 l-6.6 -0.6 Z" fill="#0000ff"/>
<path d="M760.3 84.6 L768.6 86.3" stroke="#ff0000" stroke-width="3.4" fill="none"/>
<path d="M752.7 76.2 l7.8 0.8 l-0.6 9.4 l-6.6 -0.6 Z" fill="#0000ff"/>
<path d="M776.0 87.7 L784.3 89.3" stroke="#ff0000" stroke-width="3.4" fill="none"/>
<path d="M768.4 79.3 l7.8 0.8 l-0.6 9.4 l-6.6 -0.6 Z" fill="#0000ff"/>
<path d="M791.7 90.8 L800.0 92.4" stroke="#ff0000" stroke-width="3.4" fill="none"/>
<path d="M784.1 82.3 l7.8 0.8 l-0.6 9.4 l-6.6 -0.6 Z" fill="#0000ff"/>
<path d="M807.4 93.9 L815.7 95.5" stroke="#ff0000" stroke-width="3.4" fill="none"/>
<path d="M799.8 85.3 l7.8 0.8 l-0.6 9.4 l-6.6 -0.6 Z" fill="#0000ff"/>
<path d="M823.1 96.9 L831.4 98.5" stroke="#ff0000" stroke-width="3.4" fill="none"/>
<path d="M815.5 88.4 l7.8 0.8 l-0.6 9.4 l-6.6 -0.6 Z" fill="#0000ff"/>
<path d="M838.8 100.0 L847.1 101.6" stroke="#ff0000" stroke-width="3.4" fill="none"/>
<path d="M831.2 91.4 l7.8 0.8 l-0.6 9.4 l-6.6 -0.6 Z" fill="#0000ff"/>
<path d="M854.5 103.1 L862.8 104.7" stroke="#ff0000" stroke-width="3.4" fill="none"/>
<path d="M846.9 94.5 l7.8 0.8 l-0.6 9.4 l-6.6 -0.6 Z" fill="#0000ff"/>
<path d="M870.2 106.1 L878.5 107.7" stroke="#ff0000" stroke-width="3.4" fill="none"/>
<path d="M862.6 97.5 l7.8 0.8 l-0.6 9.4 l-6.6 -0.6 Z" fill="#0000ff"/>
<path d="M885.9 109.2 L894.2 110.8" stroke="#ff0000" stroke-width="3.4" fill="none"/>
<path d="M878.3 100.5 l7.8 0.8 l-0.6 9.4 l-6.6 -0.6 Z" fill="#0000ff"/>
<path d="M901.6 112.3 L909.9 113.9" stroke="#ff0000" stroke-width="3.4" fill="none"/>
<path d="M894.0 103.6 l7.8 0.8 l-0.6 9.4 l-6.6 -0.6 Z" fill="#0000ff"/>
<path d="M917.3 115.3 L925.6 116.9" stroke="#ff0000" stroke-width="3.4" fill="none"/>
<path d="M909.7 106.6 l7.8 0.8 l-0.6 9.4 l-6.6 -0.6 Z" fill="#0000ff"/>
<path d="M933.0 118.4 L941.3 120.0" stroke="#ff0000" stroke-width="3.4" fill="none"/>
<path d="M925.4 109.6 l7.8 0.8 l-0.6 9.4 l-6.6 -0.6 Z" fill="#0000ff"/>
<path d="M948.7 121.5 L957.0 123.1" stroke="#ff0000" stroke-width="3.4" fill="none"/>
<path d="M941.1 112.7 l7.8 0.8 l-0.6 9.4 l-6.6 -0.6 Z" fill="#0000ff"/>
<path d="M964.4 124.5 L972.7 126.2" stroke="#ff0000" stroke-width="3.4" fill="none"/>
<path d="M956.8 115.7 l7.8 0.8 l-0.6 9.4 l-6.6 -0.6 Z" fill="#0000ff"/>
<path d="M980.1 127.6 L988.4 129.2" stroke="#ff0000" stroke-width="3.4" fill="none"/>
<path d="M972.5 118.7 l7.8 0.8 l-0.6 9.4 l-6.6 -0.6 Z" fill="#0000ff"/>
<path d="M988.2 121.8 l7.8 0.8 l-0.6 9.4 l-6.6 -0.6 Z" fill="#0000ff"/>
<path d="M565.8 22 L564.6 31.4 M564.4 33 L563.6 40.4" stroke="#0000ff" stroke-width="2.8" fill="none"/>
<path d="M557 37.6 l4.8 -2.4" stroke="#0000ff" stroke-width="3" fill="none"/>
<path d="M565.8 40.6 h6.4 l-0.6 15 h-4.6 Z" fill="#0000ff"/>
<path d="M564.4 41.4 L562.4 53.6" stroke="#ffb300" stroke-width="3.2" fill="none"/>
<path d="M558.6 46.8 L557.2 54.6" stroke="#0000ff" stroke-width="4" fill="none"/>
<path d="M560.4 53 L557.6 66" stroke="#00ffff" stroke-width="3.4" fill="none"/>
<path d="M556.4 56 L553 63.4" stroke="#ffb300" stroke-width="3" fill="none"/>
<path d="M562.6 58 l1.4 4 M566.6 63.4 l1.6 3.4" stroke="#0000ff" stroke-width="2.4" fill="none"/>
<rect x="560" y="67" width="9" height="3.3" fill="#f7cfe6"/>
<path d="M550.8 68 L550.4 76" stroke="#0000ff" stroke-width="2.4" fill="none"/>
<path d="M1003.4 106.6 L1002.6 114.6 M1002.4 120.6 L1001.8 129.6 M1001.4 136.8 L1001 141.4" stroke="#0000ff" stroke-width="3.4" fill="none"/>
<path d="M1000.6 127 L1005.6 149 L997.5 151 Z" fill="#f6cfe6"/>
<path d="M996.6 137 L995.6 153" stroke="#00ffff" stroke-width="4.6" fill="none"/>
<path d="M1000 150 l5 -1.6 l-1 4 l-5 1.6 Z" fill="#00ffff"/>
<path d="M987 140 L989.6 148.6 L992.6 149.6 M1000.4 137.6 l2.6 3.6" stroke="#0000ff" stroke-width="2.8" fill="none"/>
<rect x="985.4" y="149.6" width="6.6" height="3" fill="#ffb300"/>
<path d="M662 91.1 L802.3 118.6" stroke="#ff0000" stroke-width="3" stroke-dasharray="7.8 8.1" fill="none"/>
<path d="M659 97.8 L797 124.8" stroke="#ff0000" stroke-width="3" stroke-dasharray="7.8 8.1" stroke-dashoffset="-4" fill="none"/>
<path d="M801.6 118 V125 h-5" stroke="#ff0000" stroke-width="2.6" fill="none"/>
<path d="M654.2 89 V101.6 M654.2 95 h5" stroke="#ff0000" stroke-width="2.2" fill="none"/>
<path d="M814 126 L638 340" stroke="#ff0000" stroke-width="3.1" stroke-dasharray="8.2 6.6" fill="none"/>
<path d="M637.6 337 V347 M640 339 l-2 -3" stroke="#ff0000" stroke-width="2.4" fill="none"/>
<path d="M765.5 104 L779 126 L768 132 M768.5 128 V143" stroke="#a5904a" stroke-width="1.4" fill="none"/>
<path d="M496 316.9 L840 384 L943 404.1 Q950 406.4 948 411.4 Q946 416 940 415 L840 395.5 L545 339.7 L492 329.7 L489 326 L496 316.9 Z" fill="#00ffff"/>
<path d="M497 322.9 L840 389.8 L941 409.5" stroke="#ad9a56" stroke-width="1.8" fill="none"/>
<path d="M496 330.9 L545 340.2 L840 396 L940 415.5" stroke="#a8954e" stroke-width="0.9" fill="none" opacity="0.85"/>
<path d="M500 317.2 L840 383.6 L942 403.5" stroke="#a8954e" stroke-width="0.8" fill="none" opacity="0.7"/>
<path d="M520 327.4 L820 385.9" stroke="#4a50d0" stroke-width="0.8" stroke-dasharray="6 5" fill="none"/>
<path d="M826 387.2 L884 398.5" stroke="#ffb300" stroke-width="3.6" fill="none"/>
<path d="M884 398.5 L938 409" stroke="#e8a820" stroke-width="1.6" fill="none"/>
<circle cx="493.6" cy="321.8" r="4" fill="#e4cc74" stroke="#00ffff" stroke-width="2.6"/>
<circle cx="493.8" cy="321.8" r="6" fill="none" stroke="#a5904a" stroke-width="1.2"/>
<circle cx="491.3" cy="329" r="5.2" fill="none" stroke="#a5904a" stroke-width="1.1"/>
<path d="M492.6 321.4 h3.4" stroke="#0000ff" stroke-width="2" fill="none"/>
<path d="M494.4 322 L497 322.9" stroke="#00ffff" stroke-width="3" fill="none"/>
<path d="M941 409.4 h9 M945.3 405 v9" stroke="#2a34e8" stroke-width="1" fill="none"/>
<path d="M705 358 L722 368 M706 372 L724 360 M713.4 365.3 v8" stroke="#a5904a" stroke-width="1.3" fill="none"/>
<path d="M577.8 73.6 L577.1999999999999 79.4" stroke="#0000ff" stroke-width="2.4" fill="none"/>
<path d="M570 80.3 L569.4 86" stroke="#0000ff" stroke-width="2.4" fill="none"/>
<path d="M641.6 86 L641.0 93" stroke="#0000ff" stroke-width="2.4" fill="none"/>
<path d="M666.2 99.7 L665.6 105.5" stroke="#0000ff" stroke-width="2.4" fill="none"/>
<path d="M770.3 109.7 L769.6999999999999 116.5" stroke="#0000ff" stroke-width="2.4" fill="none"/>
<path d="M775 113.5 L774.4 121" stroke="#0000ff" stroke-width="2.4" fill="none"/>
<path d="M762 119.4 L761.4 126" stroke="#0000ff" stroke-width="2.4" fill="none"/>
<path d="M783.3 121 L782.6999999999999 128" stroke="#0000ff" stroke-width="2.4" fill="none"/>
<path d="M800 116.5 L799.4 123" stroke="#0000ff" stroke-width="2.4" fill="none"/>
<path d="M824.6 131 L824.0 136.8" stroke="#0000ff" stroke-width="2.4" fill="none"/>
<path d="M881.3 139.7 L880.6999999999999 146.5" stroke="#0000ff" stroke-width="2.4" fill="none"/>
<path d="M495 305.5 L494.4 312" stroke="#0000ff" stroke-width="2.4" fill="none"/>
<path d="M558.8 325 L558.1999999999999 332.6" stroke="#0000ff" stroke-width="2.4" fill="none"/>
<path d="M572.4 320 L571.8 326.8" stroke="#0000ff" stroke-width="2.4" fill="none"/>
<path d="M625.6 330 L625.0 337.5" stroke="#0000ff" stroke-width="2.4" fill="none"/>
<path d="M650.5 344.8 L649.9 352" stroke="#0000ff" stroke-width="2.4" fill="none"/>
<path d="M715.4 346 L714.8 354.5" stroke="#0000ff" stroke-width="2.4" fill="none"/>
<path d="M720.7 358 L720.1 365.3" stroke="#0000ff" stroke-width="2.4" fill="none"/>
<path d="M826 377.4 L825.4 384.7" stroke="#0000ff" stroke-width="2.4" fill="none"/>
<path d="M716.2 244.3 L731.2 246.8 M712.5 253.7 L729.3 256.8 M755 251.2 L771.8 255.6 M753.7 261.2 L771.2 265" stroke="#00ffff" stroke-width="2.8" fill="none"/>
<path d="M733.7 256.6 L750 260" stroke="#00ffff" stroke-width="3.4" fill="none"/>
<path d="M714 247 L732 251.4 M712 250 L730 254 M756 255.6 L772 259.8" stroke="#b9a455" stroke-width="2" fill="none"/>
<path d="M708 248 L724 260 M714 240 L722 262 M706 256 L726 246 M722 262 L712 268 M730 250 L738 264 M728 262 L752 266 M748 262 L738 270 M750 262 L750 272 M752 250 L762 246 M752 250 L748 262 M760 262 L772 272 M770 262 L760 276 M772 256 L782 258 M774 254 L778 266 M766 270 L768 276" stroke="#a5904a" stroke-width="1.5" fill="none"/>
<path d="M719.2 226.9 L717.6 228" stroke="#0000ff" stroke-width="3" fill="none"/>
<path d="M719.2 231.9 L717.6 250" stroke="#0000ff" stroke-width="3" fill="none"/>
<path d="M739 236.2 L737.4 247.5" stroke="#0000ff" stroke-width="3" fill="none"/>
<path d="M739 250.6 L737.4 258" stroke="#0000ff" stroke-width="3" fill="none"/>
<path d="M748.2 237.5 L746.6 238.7" stroke="#0000ff" stroke-width="3" fill="none"/>
<path d="M748.2 247.5 L746.6 255" stroke="#0000ff" stroke-width="3" fill="none"/>
<path d="M760.6 243 L759.0 260" stroke="#0000ff" stroke-width="3" fill="none"/>
<path d="M764.4 242.5 L762.8 250" stroke="#0000ff" stroke-width="3" fill="none"/>
<path d="M764.4 252.5 L762.8 259" stroke="#0000ff" stroke-width="3" fill="none"/>
<path d="M753.7 265 L826 277.6" stroke="#d89ab0" stroke-width="1.4" fill="none"/>
<path d="M823 273.6 L842.6 281 L822 279.8 Z" fill="#f2a6b4" stroke="#c88a98" stroke-width="0.5"/>
<path d="M743 258.7 L757.4 193" stroke="#b6e6cc" stroke-width="2.4" fill="none"/>
<path d="M741.9 258.5 L756.2 193" stroke="#8a9c70" stroke-width="0.6" fill="none"/>
<path d="M753.8 192.4 L761.6 176.2 L761.3 194.2 Q757.4 196.2 753.8 192.4 Z" fill="#bfe9cf" stroke="#6f9478" stroke-width="0.6"/>
<ellipse cx="757.5" cy="193.6" rx="3.7" ry="1.5" fill="#5f8a6a" transform="rotate(12 757.5 193.6)"/>
<path d="M741.8 259.3 L744.9 219" stroke="#0c1c8c" stroke-width="2.5" fill="none"/>
<path d="M741.2 219 L746 207.8 L748.8 219.8 Q745 221.6 741.2 219 Z" fill="#0c1c8c"/>
<text x="738" y="174.4" font-size="13.4" fill="#3f9a42" textLength="19.4" lengthAdjust="spacingAndGlyphs">YM</text>
<text x="727" y="205.8" font-size="13" fill="#3a5aee" textLength="18.6" lengthAdjust="spacingAndGlyphs">ZM</text>
<text x="825.6" y="296.2" font-size="13" fill="#c93a3a" textLength="19.6" lengthAdjust="spacingAndGlyphs">XM</text>
<path d="M446.5 483.7 L468 487.3 L463 513.8 L443.7 511 Z" fill="#dcdcdc" stroke="#bdbdbd" stroke-width="0.8"/>
<path d="M445.8 495 L466 498.7 M445 501.6 L464.5 505.2" stroke="#b4b4b4" stroke-width="0.8" fill="none"/>
<path d="M446.6 484 L444 506" stroke="#8fd08f" stroke-width="1.2" fill="none"/>
<path d="M444 512.6 L470 517.2" stroke="#d42020" stroke-width="2.4" fill="none"/>
<path d="M468 514.6 L477.4 518.6 L467.6 519.6 Z" fill="#d42020"/>
<path d="M441.8 510 L443 502" stroke="#0a22b0" stroke-width="3" fill="none"/>
<path d="M439.6 503.4 L443.2 495.4 L446.2 503.8 Z" fill="#0a22b0"/>
<circle cx="441.2" cy="512.6" r="4.3" fill="url(#sph)"/>
<text x="445" y="483.4" font-size="12" fill="#2c9a2c">Y</text>
<text x="440.4" y="495.4" font-size="11.5" fill="#2040ff">Z</text>
<text x="478.4" y="525" font-size="11.5" fill="#d03030">X</text>
</svg></div>
</body></html>
